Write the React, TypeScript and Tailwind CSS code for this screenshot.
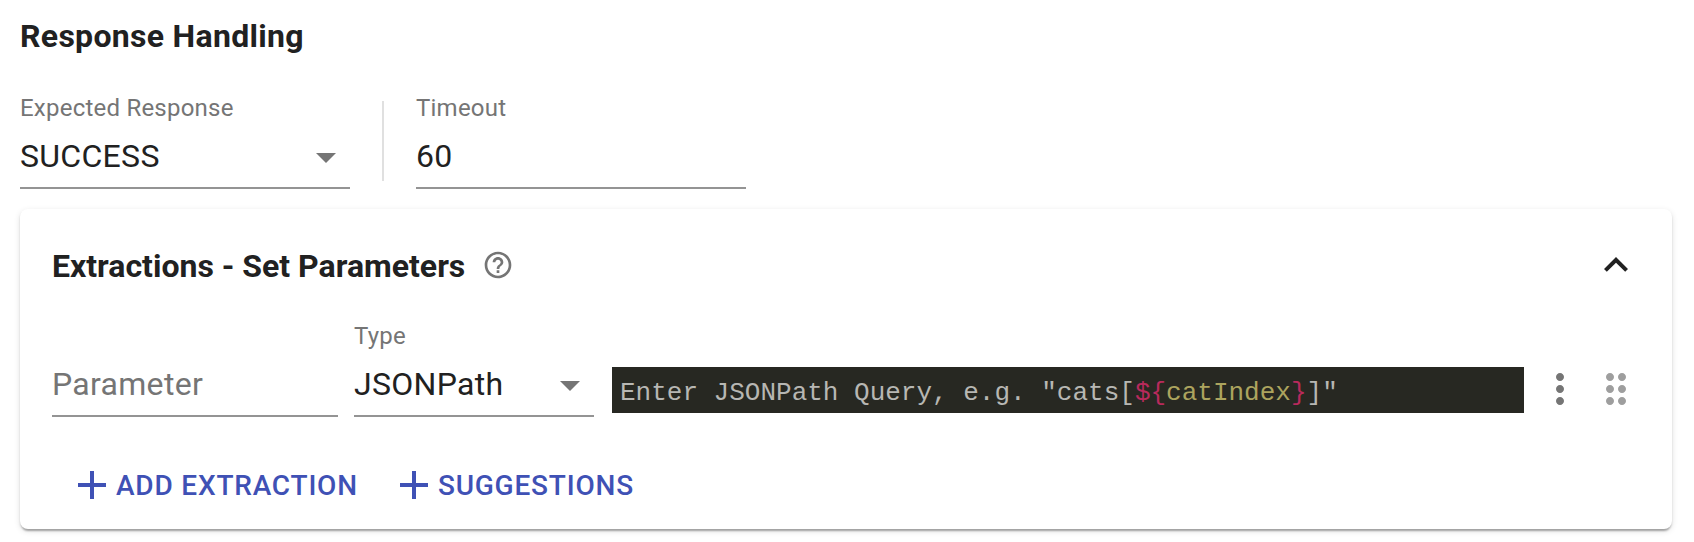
import type { ReactNode } from "react";

type IconProps = { d: string; className?: string };

function Icon({ d, className = "" }: IconProps) {
  return (
    <svg viewBox="0 0 24 24" fill="currentColor" className={`shrink-0 ${className}`} aria-hidden="true">
      <path d={d} />
    </svg>
  );
}

const paths = {
  arrowDown: "M7 10l5 5 5-5z",
  help: "M11 18h2v-2h-2v2zm1-16C6.48 2 2 6.48 2 12s4.48 10 10 10 10-4.48 10-10S17.52 2 12 2zm0 18c-4.41 0-8-3.59-8-8s3.59-8 8-8 8 3.59 8 8-3.59 8-8 8zm0-14c-2.21 0-4 1.79-4 4h2c0-1.1.9-2 2-2s2 .9 2 2c0 2-3 1.75-3 5h2c0-2.25 3-2.5 3-5 0-2.21-1.79-4-4-4z",
  collapse: "M12 8l-6 6 1.41 1.41L12 10.83l4.59 4.58L18 14z",
  more: "M12 8c1.1 0 2-.9 2-2s-.9-2-2-2-2 .9-2 2 .9 2 2 2zm0 2c-1.1 0-2 .9-2 2s.9 2 2 2 2-.9 2-2-.9-2-2-2zm0 6c-1.1 0-2 .9-2 2s.9 2 2 2 2-.9 2-2-.9-2-2-2z",
  drag: "M11 18c0 1.1-.9 2-2 2s-2-.9-2-2 .9-2 2-2 2 .9 2 2zm-2-8c-1.1 0-2 .9-2 2s.9 2 2 2 2-.9 2-2-.9-2-2-2zm0-6c-1.1 0-2 .9-2 2s.9 2 2 2 2-.9 2-2-.9-2-2-2zm6 4c1.1 0 2-.9 2-2s-.9-2-2-2-2 .9-2 2 .9 2 2 2zm0 2c-1.1 0-2 .9-2 2s.9 2 2 2 2-.9 2-2-.9-2-2-2zm0 6c-1.1 0-2 .9-2 2s.9 2 2 2 2-.9 2-2-.9-2-2-2z",
  add: "M19 13h-6v6h-2v-6H5v-2h6V5h2v6h6v2z",
};

type FieldProps = { label?: string; className: string; select?: boolean; children: ReactNode };

function Field({ label, className, select, children }: FieldProps) {
  return (
    <div className={`flex h-[93px] shrink-0 flex-col border-b-2 border-[#949494] ${className}`}>
      <div className="h-6 text-2xl leading-6 tracking-[0.225px] text-[#757575]">{label}</div>
      <div className="mt-5 flex h-8 items-center justify-between text-[32px] leading-8 tracking-[0.3px]">
        <span>{children}</span>
        {select && <Icon d={paths.arrowDown} className="mt-[2px] size-12 text-[#757575]" />}
      </div>
    </div>
  );
}

function AddButton({ children }: { children: string }) {
  return (
    <button className="flex h-12 items-center text-[28px] font-medium leading-[48px] tracking-[0.8px] text-[#3f51b5]">
      <Icon d={paths.add} className="size-12" />
      <span className="pt-[2px]">{children}</span>
    </button>
  );
}

export default function App() {
  return (
    <main className="h-[542px] overflow-hidden bg-white px-5 pt-5 font-['Roboto',sans-serif] text-[#212121]">
      <h2 className="text-[32px] font-bold leading-8 tracking-[0.3px]">Response Handling</h2>

      <div className="mt-11 flex">
        <Field label="Expected Response" select className="w-[330px]">
          SUCCESS
        </Field>
        <div className="mx-8 mt-[5px] h-20 w-[2px] bg-[#e0e0e0]" />
        <Field label="Timeout" className="w-[330px]">
          60
        </Field>
      </div>

      <section className="mt-5 h-[320px] w-[1652px] rounded-lg bg-white px-8 pt-8 shadow-[0_4px_2px_-2px_rgba(0,0,0,0.2),0_2px_2px_0_rgba(0,0,0,0.14),0_2px_6px_0_rgba(0,0,0,0.12)]">
        <div className="flex h-12 items-center">
          <h3 className="mt-[2px] text-[32px] font-bold leading-8">Extractions - Set Parameters</h3>
          <Icon d={paths.help} className="ml-[17px] size-8 text-[#757575]" />
          <Icon d={paths.collapse} className="ml-auto size-12" />
        </div>

        <div className="mt-[35px] flex">
          <Field className="w-[286px]">
            <span className="text-[#757575]">Parameter</span>
          </Field>
          <Field label="Type" select className="ml-4 w-[240px]">
            JSONPath
          </Field>
          <div className="ml-[18px] mt-[43px] h-[46px] w-[912px] whitespace-pre bg-[#272822] pl-2 pt-1 font-['Liberation_Mono',monospace] text-[26px] leading-[44px] text-[#b7b7b3]">
            Enter JSONPath Query, e.g. "cats[<span className="text-[#b82a5c]">{"${"}</span>
            <span className="text-[#aca45e]">catIndex</span>
            <span className="text-[#b82a5c]">{"}"}</span>]"
          </div>
          <Icon d={paths.more} className="ml-3 mt-[41px] size-12 text-[#757575]" />
          <Icon d={paths.drag} className="ml-2 mt-[41px] size-12 text-[#9e9e9e]" />
        </div>

        <div className="mt-11 flex gap-8 pl-4">
          <AddButton>ADD EXTRACTION</AddButton>
          <AddButton>SUGGESTIONS</AddButton>
        </div>
      </section>
    </main>
  );
}
